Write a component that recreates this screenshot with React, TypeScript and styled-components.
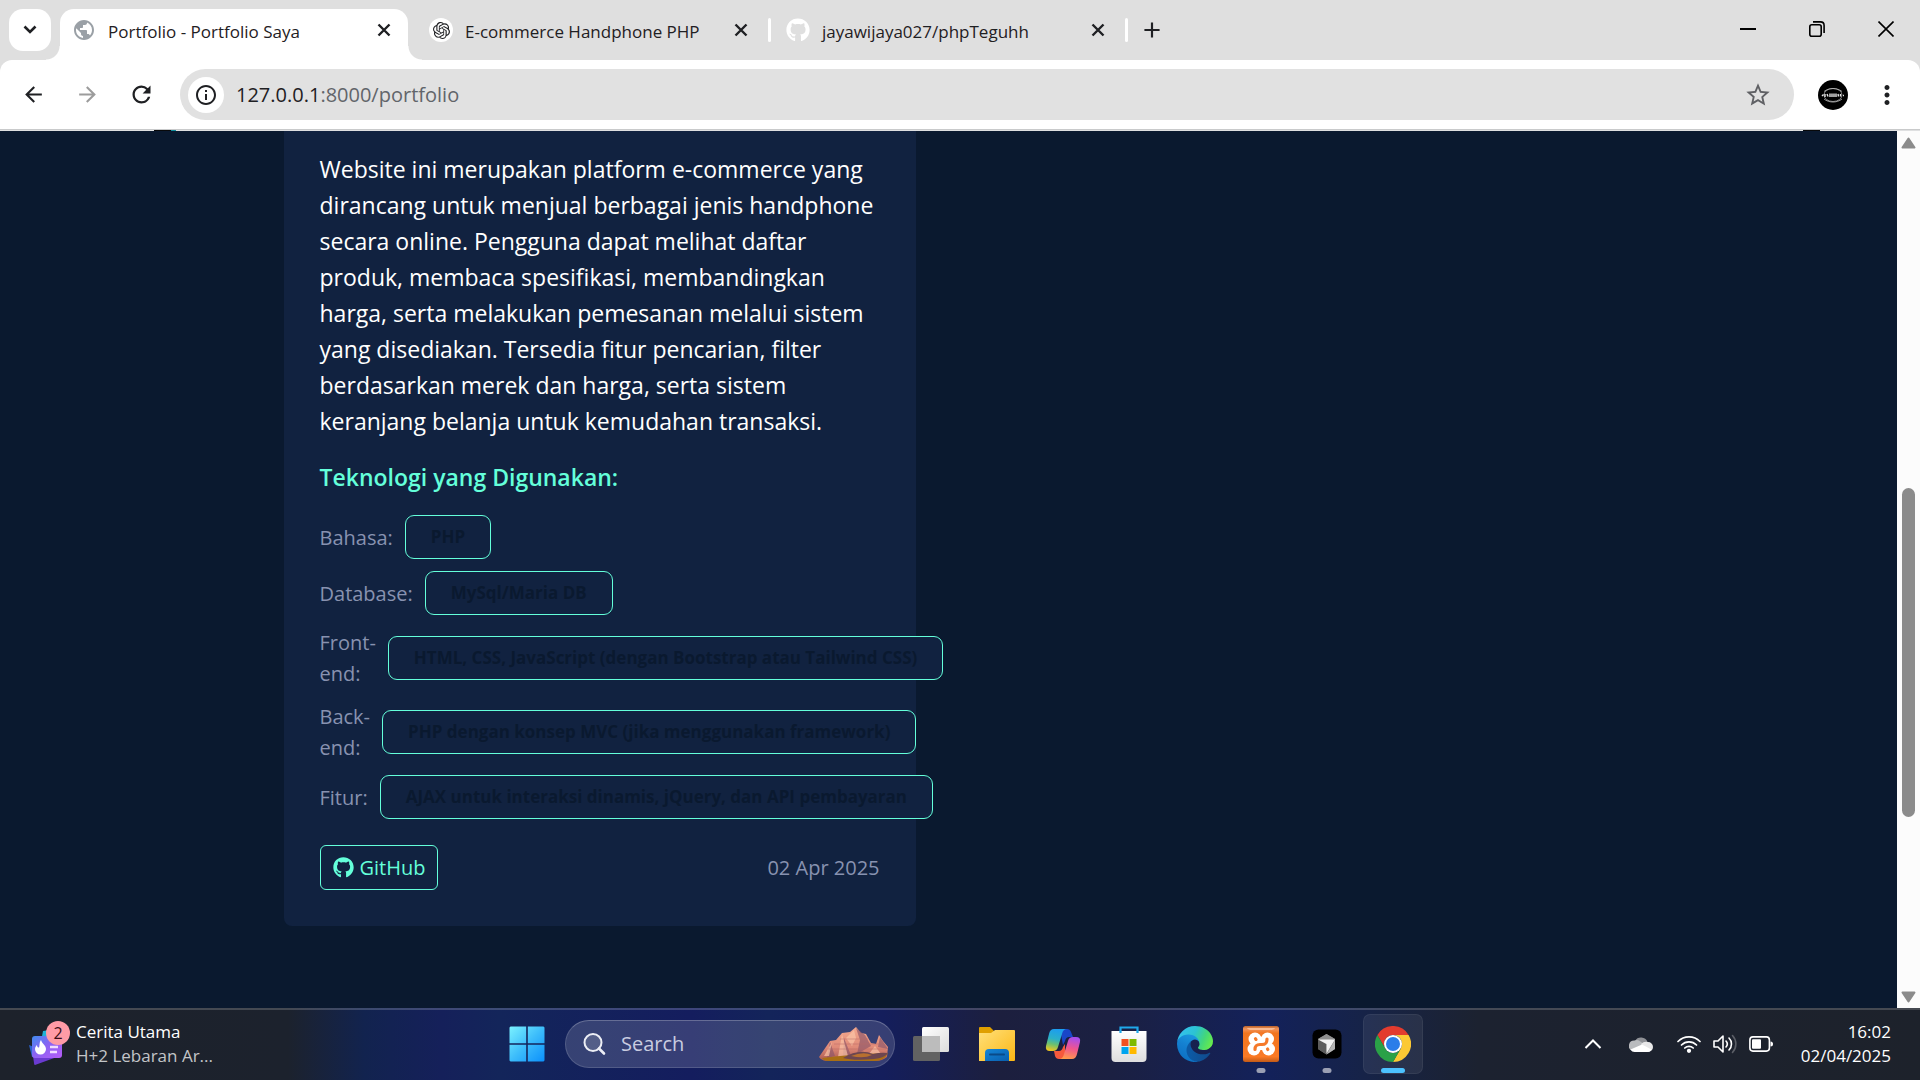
import React from "react";
import styled, { createGlobalStyle, css } from "styled-components";
import {
  MdArrowBack,
  MdArrowForward,
  MdInfoOutline,
  MdMoreVert,
  MdPublic,
  MdRefresh,
  MdStarBorder,
  MdAdd,
} from "react-icons/md";
import { FaGithub } from "react-icons/fa";
import { SiOpenai } from "react-icons/si";

const GlobalStyle = createGlobalStyle`
  * { box-sizing: border-box; }
  html, body { margin: 0; height: 100%; }
  body {
    overflow: hidden;
    font-family: "Segoe UI", "Open Sans", "Noto Sans", sans-serif;
  }
  button, input { font: inherit; }
  button { border: 0; padding: 0; background: none; cursor: pointer; }
  h2, p, ul { margin: 0; padding: 0; }
`;

const Screen = styled.div`
  display: flex;
  flex-direction: column;
  height: 100vh;
`;

/* ---------- browser chrome ---------- */

const center = css`
  display: flex;
  align-items: center;
  justify-content: center;
`;

const TabStrip = styled.header`
  display: flex;
  align-items: center;
  height: 60px;
  padding-left: 9px;
  background: #dfdfdf;
  color: #1f2023;
`;

const TabSearch = styled.button`
  ${center}
  width: 42px;
  height: 42px;
  margin-right: 9px;
  border-radius: 14px;
  background: #fff;
  color: #1f2023;
`;

const Tabs = styled.nav`
  display: flex;
  align-self: stretch;
  align-items: center;
`;

const Tab = styled.div<{ $active?: boolean }>`
  position: relative;
  display: flex;
  align-items: center;
  align-self: flex-end;
  width: 348px;
  height: 51px;
  padding: 0 12px 9px;
  border-radius: 14px 14px 0 0;
  background: ${(p) => (p.$active ? "#fff" : "transparent")};

  ${(p) =>
    p.$active &&
    css`
      &::before,
      &::after {
        content: "";
        position: absolute;
        bottom: 0;
        width: 14px;
        height: 14px;
      }
      &::before {
        right: 100%;
        background: radial-gradient(circle at 0 0, transparent 13px, #fff 14px);
      }
      &::after {
        left: 100%;
        background: radial-gradient(circle at 100% 0, transparent 13px, #fff 14px);
      }
    `}
`;

const Favicon = styled.span<{ $color: string; $plate?: boolean }>`
  ${center}
  width: 24px;
  height: 24px;
  border-radius: 50%;
  background: ${(p) => (p.$plate ? "#fff" : "transparent")};
  color: ${(p) => p.$color};
`;

const TabTitle = styled.a`
  flex: 1;
  margin-left: 12px;
  padding-top: 3px;
  color: #1f2023;
  font-size: 17px;
  line-height: 24px;
  text-decoration: none;
  white-space: nowrap;
`;

const TabClose = styled.button`
  ${center}
  width: 24px;
  height: 24px;
`;

const TabDivider = styled.span<{ $hidden?: boolean }>`
  width: 3px;
  height: 24px;
  margin: 0 3px;
  border-radius: 2px;
  background: ${(p) => (p.$hidden ? "transparent" : "#fff")};
`;

const NewTab = styled.button`
  ${center}
  width: 42px;
  height: 42px;
  color: #1f2023;
`;

const WindowControls = styled.div`
  display: flex;
  align-self: stretch;
  margin-left: auto;
`;

const WindowButton = styled.button`
  ${center}
  width: 69px;
  height: 58px;
  color: #000;
`;

const ToolbarBack = styled.div`
  background: #dfdfdf;
`;

const Toolbar = styled.div`
  display: flex;
  align-items: center;
  height: 69px;
  padding: 0 9px 0 6px;
  border-radius: 12px 12px 0 0;
  background: #fff;
`;

const ToolButton = styled.button<{ $muted?: boolean }>`
  ${center}
  width: 54px;
  height: 48px;
  color: ${(p) => (p.$muted ? "#9c9c9c" : "#1f2023")};
`;

const MenuButton = styled(ToolButton)`
  width: 48px;
`;

const Omnibox = styled.form`
  display: flex;
  flex: 1;
  align-items: center;
  height: 51px;
  margin-left: 12px;
  padding: 0 14px 0 8px;
  border-radius: 26px;
  background: #e1e1e1;
`;

const SiteInfo = styled.button`
  ${center}
  width: 36px;
  height: 36px;
  border-radius: 50%;
  background: #fff;
  color: #1f2023;
`;

const UrlHost = styled.label`
  margin-left: 12px;
  color: #1f2023;
  font-size: 20px;
  line-height: 28px;
`;

const UrlPath = styled.input`
  flex: 1;
  min-width: 0;
  border: 0;
  padding: 0;
  outline: 0;
  background: none;
  color: #62656a;
  font-size: 20px;
  line-height: 28px;
`;

const Bookmark = styled.button`
  ${center}
  width: 44px;
  height: 44px;
  color: #5f6064;
`;

const Profile = styled.button`
  ${center}
  width: 30px;
  height: 30px;
  margin: 0 15px 0 24px;
  border-radius: 50%;
  background: #000;
`;

const ToolbarEdge = styled.div`
  height: 2px;
  border-top: 1px solid #c9cacb;
  background: linear-gradient(
    90deg,
    #dfe0e1 154px,
    #08090b 154px 171px,
    #0e8c9c 171px 176px,
    #dfe0e1 176px calc(100% - 117px),
    #08090b calc(100% - 117px) calc(100% - 100px),
    #dfe0e1 calc(100% - 100px)
  );
`;

/* ---------- web page ---------- */

const Viewport = styled.div`
  display: flex;
  flex: 1;
  min-height: 0;
  background: #0a192f;
`;

const PageBody = styled.main`
  flex: 1;
  min-width: 0;
  overflow: hidden;
`;

const PageContainer = styled.div`
  display: grid;
  grid-template-columns: repeat(2, minmax(0, 1fr));
  gap: 66px;
  max-width: 1330px;
  margin: 0 auto;
`;

const Card = styled.article`
  padding: 20px 36px 36px;
  border-radius: 0 0 8px 8px;
  background: #112240;
`;

const Description = styled.p`
  color: #fff;
  font-size: 23px;
  line-height: 36px;
`;

const TechHeading = styled.h2`
  margin: 20px 0;
  color: #64ffda;
  font-size: 23px;
  font-weight: 600;
  line-height: 36px;
`;

const TechList = styled.ul`
  display: flex;
  flex-direction: column;
  gap: 12px;
  list-style: none;
`;

const TechRow = styled.li`
  display: flex;
  align-items: center;
  gap: 12px;
  color: #8892b0;
  font-size: 20px;
  line-height: 31px;
`;

const TechBadge = styled.span`
  padding: 10px 25px;
  border: 1px solid #64ffda;
  border-radius: 9px;
  background: #112240;
  color: #0a192f;
  font-size: 17px;
  font-weight: 700;
  line-height: 22px;
  white-space: nowrap;
`;

const CardFooter = styled.footer`
  display: flex;
  align-items: center;
  justify-content: space-between;
  margin-top: 26px;
`;

const RepoLink = styled.a`
  display: flex;
  align-items: center;
  gap: 6px;
  height: 45px;
  padding: 0 12px;
  border: 1px solid #64ffda;
  border-radius: 6px;
  color: #64ffda;
  font-size: 20px;
  line-height: 31px;
  text-decoration: none;
`;

const Published = styled.time`
  color: #8892b0;
  font-size: 20px;
  line-height: 31px;
`;

const ScrollBar = styled.div`
  display: flex;
  flex-direction: column;
  align-items: center;
  width: 23px;
  background: #fcfcfc;
`;

const ScrollArrow = styled.button`
  ${center}
  width: 23px;
  height: 23px;
`;

const ScrollSpace = styled.div<{ $grow: number }>`
  flex: ${(p) => p.$grow} 1 0;
`;

const ScrollThumb = styled.div<{ $grow: number }>`
  flex: ${(p) => p.$grow} 1 0;
  width: 13px;
  border-radius: 7px;
  background: #8b8b8b;
`;

/* ---------- taskbar ---------- */

const TaskBar = styled.footer`
  display: grid;
  grid-template-columns: 1fr auto 1fr;
  align-items: center;
  height: 72px;
  padding-bottom: 2px;
  border-top: 2px solid rgba(255, 255, 255, 0.18);
  background: linear-gradient(
      90deg,
      #1d222b 0,
      #1c222d 15%,
      #12234f 19%,
      #15205a 23%,
      #13255a 26%,
      #141d5e 36%,
      #13245a 40%,
      #141e5c 46%,
      #1c1f3e 52%,
      #1b2042 58%,
      #13215a 66%,
      #162348 71%,
      #1c2230 77%,
      #1d222b 100%
    )
    border-box;
`;

const Widgets = styled.button`
  display: flex;
  align-items: center;
  gap: 6px;
  padding-left: 28px;
  text-align: left;
`;

const WidgetText = styled.span`
  display: flex;
  flex-direction: column;
  font-size: 17px;
  line-height: 24px;
  color: #fff;
`;

const WidgetSub = styled.span`
  color: #c3c5c8;
`;

const Apps = styled.nav`
  display: flex;
  align-items: center;
  gap: 6px;
`;

const AppButton = styled.button<{ $active?: boolean }>`
  position: relative;
  ${center}
  width: 60px;
  height: 60px;
  border-radius: 7px;
  ${(p) =>
    p.$active &&
    css`
      background: rgba(255, 255, 255, 0.07);
      box-shadow: inset 0 0 0 1px rgba(255, 255, 255, 0.06);
    `}
`;

const RunningMark = styled.span<{ $active?: boolean }>`
  position: absolute;
  bottom: 1px;
  left: 50%;
  width: ${(p) => (p.$active ? 24 : 9)}px;
  height: 5px;
  border-radius: 3px;
  background: ${(p) => (p.$active ? "#4cc2ff" : "#9a9fb3")};
  transform: translateX(-50%);
`;

const SearchBox = styled.form`
  display: flex;
  align-items: center;
  gap: 15px;
  width: 330px;
  height: 48px;
  margin-left: 2px;
  padding: 0 3px 0 16px;
  border: 1px solid rgba(255, 255, 255, 0.14);
  border-top-color: rgba(255, 255, 255, 0.24);
  border-radius: 24px;
  background: rgba(255, 255, 255, 0.15);
`;

const SearchInput = styled.input`
  flex: 1;
  min-width: 0;
  border: 0;
  padding: 0;
  outline: 0;
  background: none;
  color: #fff;
  font-size: 20px;
  line-height: 28px;
  &::placeholder {
    color: #c9cce0;
    opacity: 1;
  }
`;

const Tray = styled.div`
  display: flex;
  align-items: center;
  justify-content: flex-end;
  gap: 12px;
  padding-right: 29px;
`;

const TrayButton = styled.button<{ $wide?: boolean }>`
  ${center}
  width: ${(p) => (p.$wide ? 48 : 24)}px;
  height: 48px;
`;

const Clock = styled.time`
  margin-left: 16px;
  color: #fff;
  font-size: 17px;
  line-height: 24px;
  text-align: right;
`;

/* ---------- drawings ---------- */

const ProfileArt = () => (
  <svg width="26" height="26" viewBox="0 0 26 26" fill="none" aria-hidden="true">
    <ellipse cx="13" cy="13" rx="9" ry="6.5" stroke="#a5a5a5" strokeWidth="0.8" />
    <path d="M4 9.500C9 5.500 17 5.500 22 9.500M4 17c5 4 13 4 18 0" stroke="#bdbdbd" strokeWidth="0.8" />
    <path d="M2 14l1.500-1.500M5 12v3M7 12l1 2.500M10 11.500v3.500M12 11.500v3.500M14 11.500v3.500M16 11.500v3.500M18 12l.5 2.500M20.500 12v2.500M23 13.500h1" stroke="#e6e6e6" strokeWidth="1.400" />
  </svg>
);

const CloseArt = () => (
  <svg width="14" height="14" viewBox="0 0 14 14" aria-hidden="true">
    <path d="M1.500 1.500l11 11M12.500 1.500l-11 11" stroke="#1f2023" strokeWidth="2.400" />
  </svg>
);

const ChevronDownArt = () => (
  <svg width="14" height="10" viewBox="0 0 14 10" aria-hidden="true">
    <path d="M1.500 1.500L7 7l5.500-5.500" fill="none" stroke="#1f2023" strokeWidth="2.600" />
  </svg>
);

const WidgetsArt = () => (
  <svg width="42" height="46" viewBox="0 0 42 46" aria-hidden="true">
    <defs>
      <linearGradient id="wCard" x1="0" y1="0" x2="1" y2="1">
        <stop offset="0" stopColor="#3f8df0" />
        <stop offset="0.45" stopColor="#8a63f2" />
        <stop offset="1" stopColor="#b65cf7" />
      </linearGradient>
    </defs>
    <path d="M15 10l20-3v14H13z" fill="#1fb3d6" />
    <path d="M1 24l3 12 20-3z" fill="#2a62c9" />
    <path d="M5 35l24 1-22 8q-1 0-1-2z" fill="#6a3bd0" />
    <rect x="4" y="15" width="30" height="22" rx="3" fill="url(#wCard)" />
    <path d="M13 19c1 4 5 5 5 9a5.500 5.500 0 0 1-11 0c0-2 1-3 2-4 0 2 1 2.500 2 2.500 1-2 0-5 2-7.500z" fill="#fff" />
    <path d="M22 26h8M22 31h7" stroke="#f1dcff" strokeWidth="2.400" />
    <circle cx="30" cy="12" r="12" fill="#ff9ba6" />
    <text x="30" y="18" textAnchor="middle" fontSize="16" fill="#3a0d16">2</text>
  </svg>
);

const StartArt = () => (
  <svg width="36" height="36" viewBox="0 0 36 36" aria-hidden="true">
    <defs>
      <linearGradient id="win" gradientUnits="userSpaceOnUse" x1="0" y1="0" x2="36" y2="36">
        <stop offset="0" stopColor="#7df3ff" />
        <stop offset="0.5" stopColor="#3dbdfb" />
        <stop offset="1" stopColor="#0a8ffb" />
      </linearGradient>
    </defs>
    <path
      fill="url(#win)"
      d="M1.500 0.500H17.200V17.200H0.500V1.500zM18.800 0.500H34.500L35.500 1.500V17.200H18.800zM0.500 18.800H17.200V35.500H1.500L0.500 34.500zM18.800 18.800H35.500V34.500L34.500 35.500H18.800z"
    />
  </svg>
);

const MagnifierArt = () => (
  <svg width="24" height="24" viewBox="0 0 24 24" fill="none" aria-hidden="true">
    <circle cx="11" cy="10.500" r="8.500" stroke="#eceef5" strokeWidth="2" fill="rgba(255,255,255,.15)" />
    <path d="M17 16.500l5 5" stroke="#eceef5" strokeWidth="2.600" strokeLinecap="round" />
  </svg>
);

const MountainsArt = () => (
  <svg width="73" height="36" viewBox="0 0 73 36" aria-hidden="true">
    <defs>
      <linearGradient id="rock" x1="0" y1="0" x2="0" y2="1">
        <stop offset="0" stopColor="#f3a98e" />
        <stop offset="0.6" stopColor="#e08a78" />
        <stop offset="1" stopColor="#a9584f" />
      </linearGradient>
    </defs>
    <path d="M1 31L12 15l6-1 6-7 8-1 6-5 5 6 5 1 5 9 5 1 3-9 4 6 5 6-1 10q-5 4-11 4H8q-5-1-7-4z" fill="url(#rock)" />
    <path d="M38 2l4 12-3 14 14-8-6-11zM26 12l8 20-9-1zM12 16l5 14-8 2zM62 11l-2 10 10 2-4-6z" fill="#8b5468" opacity="0.65" />
    <path d="M24 8l6 22-10 1zM36 4l-8 8 6 8 4-8zM14 16l-8 14h5zM57 20l-6 8h12z" fill="#fbc4a6" opacity="0.7" />
    <path d="M16 18h46M10 23h58M22 13h28" stroke="#b96a68" strokeWidth="0.800" opacity="0.6" />
    <path d="M4 32q30-4 66-5-4 8-13 8H10q-4 0-6-3z" fill="#a96f14" />
    <path d="M25 32q16-10 30-4 8-2 15-1-3 5-14 6-20 2-31-1z" fill="#6d4650" />
    <path d="M33 30q12-5 21-1-8 4-21 1z" fill="#b8702f" />
  </svg>
);

const TaskViewArt = () => (
  <svg width="36" height="34" viewBox="0 0 36 34" aria-hidden="true">
    <defs>
      <linearGradient id="tv" x1="0" y1="0" x2="1" y2="1">
        <stop offset="0" stopColor="#fff" />
        <stop offset="1" stopColor="#dcdcdc" />
      </linearGradient>
    </defs>
    <rect x="0" y="9" width="27" height="25" rx="1.500" fill="#626262" />
    <rect x="9" y="0" width="27" height="25" rx="1.500" fill="url(#tv)" />
    <rect x="9" y="9" width="18" height="16" fill="#bcbcbc" />
  </svg>
);

const ExplorerArt = () => (
  <svg width="36" height="34" viewBox="0 0 36 34" aria-hidden="true">
    <defs>
      <linearGradient id="fold" x1="0" y1="0" x2="1" y2="1">
        <stop offset="0" stopColor="#ffe07a" />
        <stop offset="1" stopColor="#fcb714" />
      </linearGradient>
      <linearGradient id="foldBlue" x1="0" y1="0" x2="1" y2="1">
        <stop offset="0" stopColor="#1486d8" />
        <stop offset="1" stopColor="#0a5fae" />
      </linearGradient>
    </defs>
    <path d="M0 1q0-1 1-1h10l4 4v4H0z" fill="#e0a000" />
    <path d="M0 6h12l4-3h19q1 0 1 1v29q0 1-1 1H0z" fill="url(#fold)" />
    <path d="M6 34V26q0-4 4-4h16q4 0 4 4v8z" fill="url(#foldBlue)" />
    <path d="M11 27.500h14" stroke="#0a4a88" strokeWidth="2" strokeLinecap="round" />
  </svg>
);

const CopilotArt = () => (
  <svg width="36" height="36" viewBox="0 0 36 36" aria-hidden="true">
    <defs>
      <linearGradient id="cpA" x1="0.500" y1="0" x2="0.300" y2="1">
        <stop offset="0" stopColor="#1c9df0" />
        <stop offset="0.450" stopColor="#2bb0c8" />
        <stop offset="0.700" stopColor="#6cc070" />
        <stop offset="1" stopColor="#f2c61e" />
      </linearGradient>
      <linearGradient id="cpB" x1="0.600" y1="0" x2="0.400" y2="1">
        <stop offset="0" stopColor="#a54df0" />
        <stop offset="0.500" stopColor="#f0558f" />
        <stop offset="1" stopColor="#ff9a4a" />
      </linearGradient>
    </defs>
    <path d="M15 3h7q3 0 4 3l2 5h-4q-3 0-4 4l-2 4z" fill="#1946c8" />
    <path d="M20 33h-6q-3 0-4-3l-1-5h5q3 0 4-4l2-3z" fill="#f5593c" />
    <path d="M9 3h13q-4 0-5 5l-4 13q-1 4-5 4H5q-5 0-4-5L4 8q1-5 5-5z" fill="url(#cpA)" />
    <path d="M27 33H14q4 0 5-5l4-13q1-4 5-4h3q5 0 4 5l-3 12q-1 5-5 5z" fill="url(#cpB)" />
  </svg>
);

const StoreArt = () => (
  <svg width="36" height="36" viewBox="0 0 36 36" aria-hidden="true">
    <defs>
      <linearGradient id="bag" x1="0" y1="0" x2="0" y2="1">
        <stop offset="0" stopColor="#fff" />
        <stop offset="1" stopColor="#dedede" />
      </linearGradient>
    </defs>
    <path d="M0.500 5h35v27q0 4-4 4h-27q-4 0-4-4z" fill="url(#bag)" />
    <path d="M9.500 7V1.500h17V7" fill="none" stroke="#1fa8ea" strokeWidth="2.200" />
    <path d="M10.500 13h7v7h-7z" fill="#f25022" />
    <path d="M18.500 13h7v7h-7z" fill="#7fba00" />
    <path d="M10.500 21h7v7h-7z" fill="#00a4ef" />
    <path d="M18.500 21h7v7h-7z" fill="#ffb900" />
  </svg>
);

const EdgeArt = () => (
  <svg width="36" height="36" viewBox="0 0 256 256" aria-hidden="true">
    <defs>
      <linearGradient id="eA" x1="0.200" y1="0.500" x2="1" y2="0.500">
        <stop offset="0" stopColor="#0c59a4" />
        <stop offset="1" stopColor="#114a8b" />
      </linearGradient>
      <linearGradient id="eB" x1="0.700" y1="0" x2="0.300" y2="1">
        <stop offset="0" stopColor="#1b9de2" />
        <stop offset="0.500" stopColor="#147fd0" />
        <stop offset="1" stopColor="#0b6fc2" />
      </linearGradient>
      <linearGradient id="eC" x1="0" y1="0.300" x2="1" y2="0.600">
        <stop offset="0" stopColor="#35c1f1" />
        <stop offset="0.450" stopColor="#2cc3d2" />
        <stop offset="0.750" stopColor="#43d77a" />
        <stop offset="1" stopColor="#66eb4e" />
      </linearGradient>
    </defs>
    <g transform="translate(-4.630 -4.920)">
      <path fill="url(#eA)" d="M235.680 195.460a93.730 93.730 0 0 1-10.540 4.710 101.870 101.870 0 0 1-35.900 6.460c-47.320 0-88.540-32.550-88.540-74.320A31.480 31.480 0 0 1 117.130 105c-42.800 1.800-53.800 46.400-53.800 72.530 0 73.880 68.090 81.370 82.760 81.370 7.910 0 19.840-2.300 27-4.560l1.310-.440a128.340 128.340 0 0 0 66.600-52.800 4 4 0 0 0-5.320-5.640Z" />
      <path fill="url(#eB)" d="M110.340 246.340A79.200 79.200 0 0 1 87.600 225a80.720 80.720 0 0 1 29.530-120c3.120-1.470 8.450-4.130 15.540-4a32.350 32.350 0 0 1 25.690 13 31.880 31.880 0 0 1 6.360 18.660c0-.210 24.460-79.600-80-79.600-43.900 0-80 41.660-80 78.210a130.150 130.150 0 0 0 12.110 56 128 128 0 0 0 156.380 67.110 75.550 75.550 0 0 1-62.780-8Z" />
      <path fill="url(#eC)" d="M156.940 153.780c-.810 1.050-3.300 2.500-3.300 5.660 0 2.610 1.700 5.120 4.720 7.230 14.380 10 41.490 8.680 41.560 8.680a59.560 59.560 0 0 0 30.270-8.350 61.380 61.380 0 0 0 30.430-52.880c.260-22.410-8-37.310-11.340-43.910C228.090 28.760 182.350 4.920 132.610 4.920a128 128 0 0 0-128 126.200c.480-36.540 36.800-66.050 80-66.050 3.500 0 23.460.340 42 10.070 16.340 8.580 24.900 18.940 30.850 29.210 6.180 10.670 7.280 24.150 7.280 29.520s-2.740 13.330-7.800 19.910Z" />
    </g>
  </svg>
);

const XamppArt = () => (
  <svg width="36" height="36" viewBox="0 0 36 36" aria-hidden="true">
    <defs>
      <linearGradient id="xp" x1="0" y1="0" x2="0" y2="1">
        <stop offset="0" stopColor="#b9622a" />
        <stop offset="0.08" stopColor="#f2935a" />
        <stop offset="0.2" stopColor="#f1751f" />
        <stop offset="0.85" stopColor="#fb7a24" />
        <stop offset="1" stopColor="#c05a18" />
      </linearGradient>
    </defs>
    <rect width="36" height="36" rx="2.500" fill="url(#xp)" />
    <path d="M4 2h28q-1 2-5 2H9q-4 0-5-2z" fill="#fbc7a4" opacity="0.8" />
    <g fill="#fff">
      <circle cx="12" cy="13" r="6.500" />
      <circle cx="24.500" cy="13" r="6.500" />
      <circle cx="11" cy="23" r="6.500" />
      <circle cx="25.500" cy="23" r="6.500" />
      <path d="M11 11h14v13H11z" />
    </g>
    <g fill="none" stroke="#f5792a" strokeWidth="3.200" strokeLinecap="round">
      <path d="M12.500 12.800l.5.600" />
      <path d="M12 23.500c0-4 1.500-5 5-5h2c4 0 5-1.500 5-5.500" />
      <path d="M24.500 23l.3.500" />
    </g>
    <path d="M16.500 6h3.500l-1.700 4.500zM16.500 29h3.500l-1.700-5z" fill="#f5792a" />
  </svg>
);

const CursorArt = () => (
  <svg width="30" height="30" viewBox="0 0 30 30" aria-hidden="true">
    <rect x="0.500" y="0.500" width="29" height="29" rx="6" fill="#000" />
    <path d="M14.500 5l8.500 5v10l-8.500 5.500L6 20V10z" fill="#7d7d7d" />
    <path d="M6 10l8.500-5 8.500 5-8.500 2z" fill="#8f8f8f" />
    <path d="M6 10l8.500 5.500v10L6 20z" fill="#5c5c5c" />
    <path d="M6 10.500h17l-8.500 14V15z" fill="#f2f2f2" />
    <path d="M23 11v9l-8.500 5.500z" fill="#b5b5b5" />
  </svg>
);

const ChromeArt = () => (
  <svg width="36" height="36" viewBox="0 0 36 36" aria-hidden="true">
    <path d="M2.400 9A18 18 0 0 1 33.600 9H18a9 9 0 0 0-7.800 13.500z" fill="#e33b2e" />
    <path d="M33.600 9A18 18 0 0 1 18 36l7.800-13.500A9 9 0 0 0 18 9z" fill="#fcc934" />
    <path d="M18 36A18 18 0 0 1 2.400 9l7.800 13.500A9 9 0 0 0 25.800 22.500z" fill="#2aa147" />
    <circle cx="18" cy="18" r="9" fill="#fff" />
    <circle cx="18" cy="18" r="7" fill="#2b7de9" />
  </svg>
);

const OneDriveArt = () => (
  <svg width="24" height="16" viewBox="0 0 24 16" aria-hidden="true">
    <path d="M6 5a7 7 0 0 1 12.500 1L12 10z" fill="#8f9196" />
    <path d="M5.500 4.500q3-1 5 .5l6 4-13 6A5.400 5.400 0 0 1 5.500 4.500z" fill="#b9bbbe" />
    <path d="M12 8q3-3 7-2a5 5 0 0 1 0 10z" fill="#e8e8e9" />
    <path d="M1.500 13.500L13 8.500l9.500 5q-1.500 2.500-4 2.500H5.500q-2.500 0-4-2.500z" fill="#fff" />
  </svg>
);

const WifiArt = () => (
  <svg width="24" height="18" viewBox="0 0 24 18" fill="none" stroke="#fff" strokeWidth="1.700" strokeLinecap="round" aria-hidden="true">
    <path d="M1 6.500a15.500 15.500 0 0 1 22 0M4.500 10a10.600 10.600 0 0 1 15 0M7.800 13a6 6 0 0 1 8.400 0" />
    <circle cx="12" cy="15.800" r="1.300" fill="#fff" />
  </svg>
);

const SpeakerArt = () => (
  <svg width="24" height="20" viewBox="0 0 24 20" fill="none" stroke="#fff" strokeWidth="1.600" strokeLinecap="round" strokeLinejoin="round" aria-hidden="true">
    <path d="M1 7h4l5-5v16l-5-5H1z" />
    <path d="M13 7a4.500 4.500 0 0 1 0 6M16 4a8.500 8.500 0 0 1 0 12" />
    <path d="M19.500 1.500a12.500 12.500 0 0 1 0 17" stroke="#5b5e66" />
  </svg>
);

const BatteryArt = () => (
  <svg width="24" height="16" viewBox="0 0 24 16" aria-hidden="true">
    <rect x="0.900" y="0.900" width="19.500" height="14.200" rx="3" fill="none" stroke="#fff" strokeWidth="1.600" />
    <rect x="3" y="3.200" width="9" height="9.600" rx="1" fill="#fff" />
    <path d="M21.500 5.500q2.500 0 2.500 2.500t-2.500 2.500z" fill="#fff" />
  </svg>
);

/* ---------- data ---------- */

const tabs = [
  { title: "Portfolio - Portfolio Saya", icon: <MdPublic size={26} />, color: "#9aa0a6", active: true },
  { title: "E-commerce Handphone PHP", icon: <SiOpenai size={17} />, color: "#1f2023", plate: true },
  { title: "jayawijaya027/phpTeguhh", icon: <FaGithub size={24} />, color: "#fff" },
];

const technologies = [
  { label: "Bahasa:", value: "PHP" },
  { label: "Database:", value: "MySql/Maria DB" },
  { label: "Front-end:", value: "HTML, CSS, JavaScript (dengan Bootstrap atau Tailwind CSS)" },
  { label: "Back-end:", value: "PHP dengan konsep MVC (jika menggunakan framework)" },
  { label: "Fitur:", value: "AJAX untuk interaksi dinamis, jQuery, dan API pembayaran" },
];

const apps = [
  { name: "Task View", art: <TaskViewArt /> },
  { name: "File Explorer", art: <ExplorerArt /> },
  { name: "Copilot", art: <CopilotArt /> },
  { name: "Microsoft Store", art: <StoreArt /> },
  { name: "Edge", art: <EdgeArt /> },
  { name: "XAMPP", art: <XamppArt />, running: true },
  { name: "Cursor", art: <CursorArt />, running: true },
  { name: "Chrome", art: <ChromeArt />, running: true, active: true },
];

export default function App() {
  return (
    <Screen>
      <GlobalStyle />
      <TabStrip>
        <TabSearch aria-label="Search tabs">
          <ChevronDownArt />
        </TabSearch>
        <Tabs>
          {tabs.map((tab) => (
            <React.Fragment key={tab.title}>
              <Tab $active={tab.active}>
                <Favicon $color={tab.color} $plate={tab.plate}>{tab.icon}</Favicon>
                <TabTitle href="#">{tab.title}</TabTitle>
                <TabClose aria-label="Close tab">
                  <CloseArt />
                </TabClose>
              </Tab>
              <TabDivider $hidden={tab.active} />
            </React.Fragment>
          ))}
        </Tabs>
        <NewTab aria-label="New tab">
          <MdAdd size={26} />
        </NewTab>
        <WindowControls>
          <WindowButton aria-label="Minimize">
            <svg width="16" height="16" viewBox="0 0 16 16"><path d="M0 8h16" stroke="#000" strokeWidth="2" /></svg>
          </WindowButton>
          <WindowButton aria-label="Restore">
            <svg width="16" height="16" viewBox="0 0 16 16" fill="none" stroke="#000" strokeWidth="1.600">
              <rect x="0.800" y="3.800" width="11.400" height="11.400" rx="2" />
              <path d="M4 0.900h7.500q3.600 0 3.600 3.600V12" />
            </svg>
          </WindowButton>
          <WindowButton aria-label="Close">
            <svg width="16" height="16" viewBox="0 0 16 16"><path d="M0.500 0.500l15 15M15.500 0.500l-15 15" stroke="#000" strokeWidth="1.600" /></svg>
          </WindowButton>
        </WindowControls>
      </TabStrip>

      <ToolbarBack>
        <Toolbar>
          <ToolButton aria-label="Back"><MdArrowBack size={25} /></ToolButton>
          <ToolButton aria-label="Forward" $muted><MdArrowForward size={25} /></ToolButton>
          <ToolButton aria-label="Reload"><MdRefresh size={27} /></ToolButton>
          <Omnibox onSubmit={(e) => e.preventDefault()}>
            <SiteInfo type="button" aria-label="Site information"><MdInfoOutline size={24} /></SiteInfo>
            <UrlHost htmlFor="address">127.0.0.1</UrlHost>
            <UrlPath id="address" type="text" defaultValue=":8000/portfolio" spellCheck={false} />
            <Bookmark type="button" aria-label="Bookmark"><MdStarBorder size={28} /></Bookmark>
          </Omnibox>
          <Profile aria-label="Profile"><ProfileArt /></Profile>
          <MenuButton aria-label="Menu"><MdMoreVert size={30} /></MenuButton>
        </Toolbar>
      </ToolbarBack>
      <ToolbarEdge />

      <Viewport>
        <PageBody>
          <PageContainer>
            <Card>
              <Description>
                Website ini merupakan platform e-commerce yang dirancang untuk menjual berbagai jenis handphone
                secara online. Pengguna dapat melihat daftar produk, membaca spesifikasi, membandingkan harga,
                serta melakukan pemesanan melalui sistem yang disediakan. Tersedia fitur pencarian, filter
                berdasarkan merek dan harga, serta sistem keranjang belanja untuk kemudahan transaksi.
              </Description>
              <TechHeading>Teknologi yang Digunakan:</TechHeading>
              <TechList>
                {technologies.map((tech) => (
                  <TechRow key={tech.label}>
                    <span>{tech.label}</span>
                    <TechBadge>{tech.value}</TechBadge>
                  </TechRow>
                ))}
              </TechList>
              <CardFooter>
                <RepoLink href="#"><FaGithub size={21} />GitHub</RepoLink>
                <Published dateTime="2025-04-02">02 Apr 2025</Published>
              </CardFooter>
            </Card>
          </PageContainer>
        </PageBody>
        <ScrollBar>
          <ScrollArrow aria-label="Scroll up">
            <svg width="15" height="12" viewBox="0 0 15 12"><path d="M7.500 1.500l6 9h-12z" fill="#8b8b8b" stroke="#8b8b8b" strokeWidth="2" strokeLinejoin="round" /></svg>
          </ScrollArrow>
          <ScrollSpace $grow={334} />
          <ScrollThumb $grow={329} />
          <ScrollSpace $grow={168} />
          <ScrollArrow aria-label="Scroll down">
            <svg width="15" height="12" viewBox="0 0 15 12"><path d="M7.500 10.500l6-9h-12z" fill="#8b8b8b" stroke="#8b8b8b" strokeWidth="2" strokeLinejoin="round" /></svg>
          </ScrollArrow>
        </ScrollBar>
      </Viewport>

      <TaskBar>
        <Widgets>
          <WidgetsArt />
          <WidgetText>
            Cerita Utama
            <WidgetSub>H+2 Lebaran Ar...</WidgetSub>
          </WidgetText>
        </Widgets>
        <Apps>
          <AppButton aria-label="Start"><StartArt /></AppButton>
          <SearchBox onSubmit={(e) => e.preventDefault()}>
            <MagnifierArt />
            <SearchInput type="text" aria-label="Search" placeholder="Search" />
            <MountainsArt />
          </SearchBox>
          {apps.map((app) => (
            <AppButton key={app.name} aria-label={app.name} $active={app.active}>
              {app.art}
              {app.running && <RunningMark $active={app.active} />}
            </AppButton>
          ))}
        </Apps>
        <Tray>
          <TrayButton aria-label="Hidden icons">
            <svg width="18" height="12" viewBox="0 0 18 12"><path d="M1.500 10L9 2.500l7.500 7.500" fill="none" stroke="#fff" strokeWidth="2" /></svg>
          </TrayButton>
          <TrayButton $wide aria-label="OneDrive"><OneDriveArt /></TrayButton>
          <TrayButton aria-label="Network"><WifiArt /></TrayButton>
          <TrayButton aria-label="Volume"><SpeakerArt /></TrayButton>
          <TrayButton aria-label="Battery"><BatteryArt /></TrayButton>
          <Clock dateTime="2025-04-02T16:02">
            16:02
            <br />
            02/04/2025
          </Clock>
        </Tray>
      </TaskBar>
    </Screen>
  );
}
